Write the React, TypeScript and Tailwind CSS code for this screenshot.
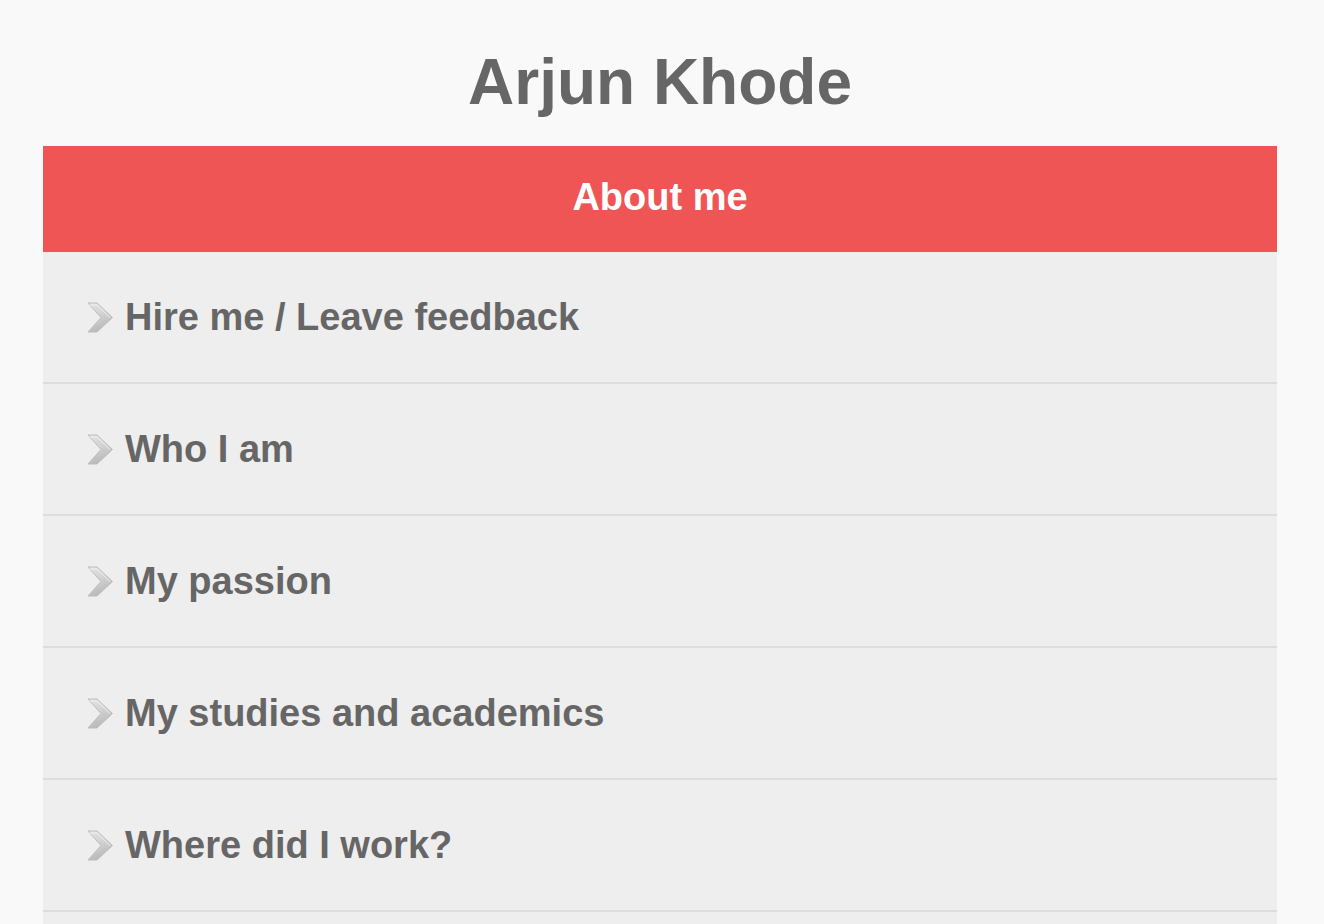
import React from "react";

const items = [
  "Hire me / Leave feedback",
  "Who I am",
  "My passion",
  "My studies and academics",
  "Where did I work?",
];

function Chevron() {
  return (
    <svg width="27" height="31" viewBox="0 0 27 31" className="shrink-0">
      <defs>
        <linearGradient id="chev" x1="0" y1="0" x2="0.3" y2="1">
          <stop offset="0" stopColor="#e4e4e4" />
          <stop offset="0.5" stopColor="#d2d2d2" />
          <stop offset="1" stopColor="#b9b9b9" />
        </linearGradient>
      </defs>
      <polygon
        points="1,1 10,1 25.5,15.5 10,30 1,30 14,15.5"
        fill="url(#chev)"
        stroke="#bdbdbd"
        strokeWidth="1"
        strokeLinejoin="round"
      />
      <polyline
        points="3,3 10,3 23,15.5"
        fill="none"
        stroke="#f0f0f0"
        strokeWidth="1"
      />
    </svg>
  );
}

export default function App() {
  return (
    <div
      className="min-h-screen bg-[#f9f9f9] text-[#666666] pl-[43px] pr-[47px]"
      style={{ fontFamily: '"Liberation Sans", Arial, Helvetica, sans-serif' }}
    >
      <h1 className="text-center font-bold text-[64px] leading-[74px] pt-[45px] pb-[27px] m-0">
        Arjun Khode
      </h1>
      <div>
        <div className="h-[106px] bg-[#ef5555] flex items-center justify-center text-white font-bold text-[38px] leading-none pb-[5px]">
          About me
        </div>
        {items.map((t) => (
          <div
            key={t}
            className="h-[132px] bg-[#eeeeee] border-b-2 border-[#dddddd] flex items-center pl-[44px] gap-[11px]"
          >
            <Chevron />
            <span className="font-bold text-[38px] leading-none">{t}</span>
          </div>
        ))}
        <div className="h-[132px] bg-[#eeeeee] border-b-2 border-[#dddddd]" />
      </div>
    </div>
  );
}
